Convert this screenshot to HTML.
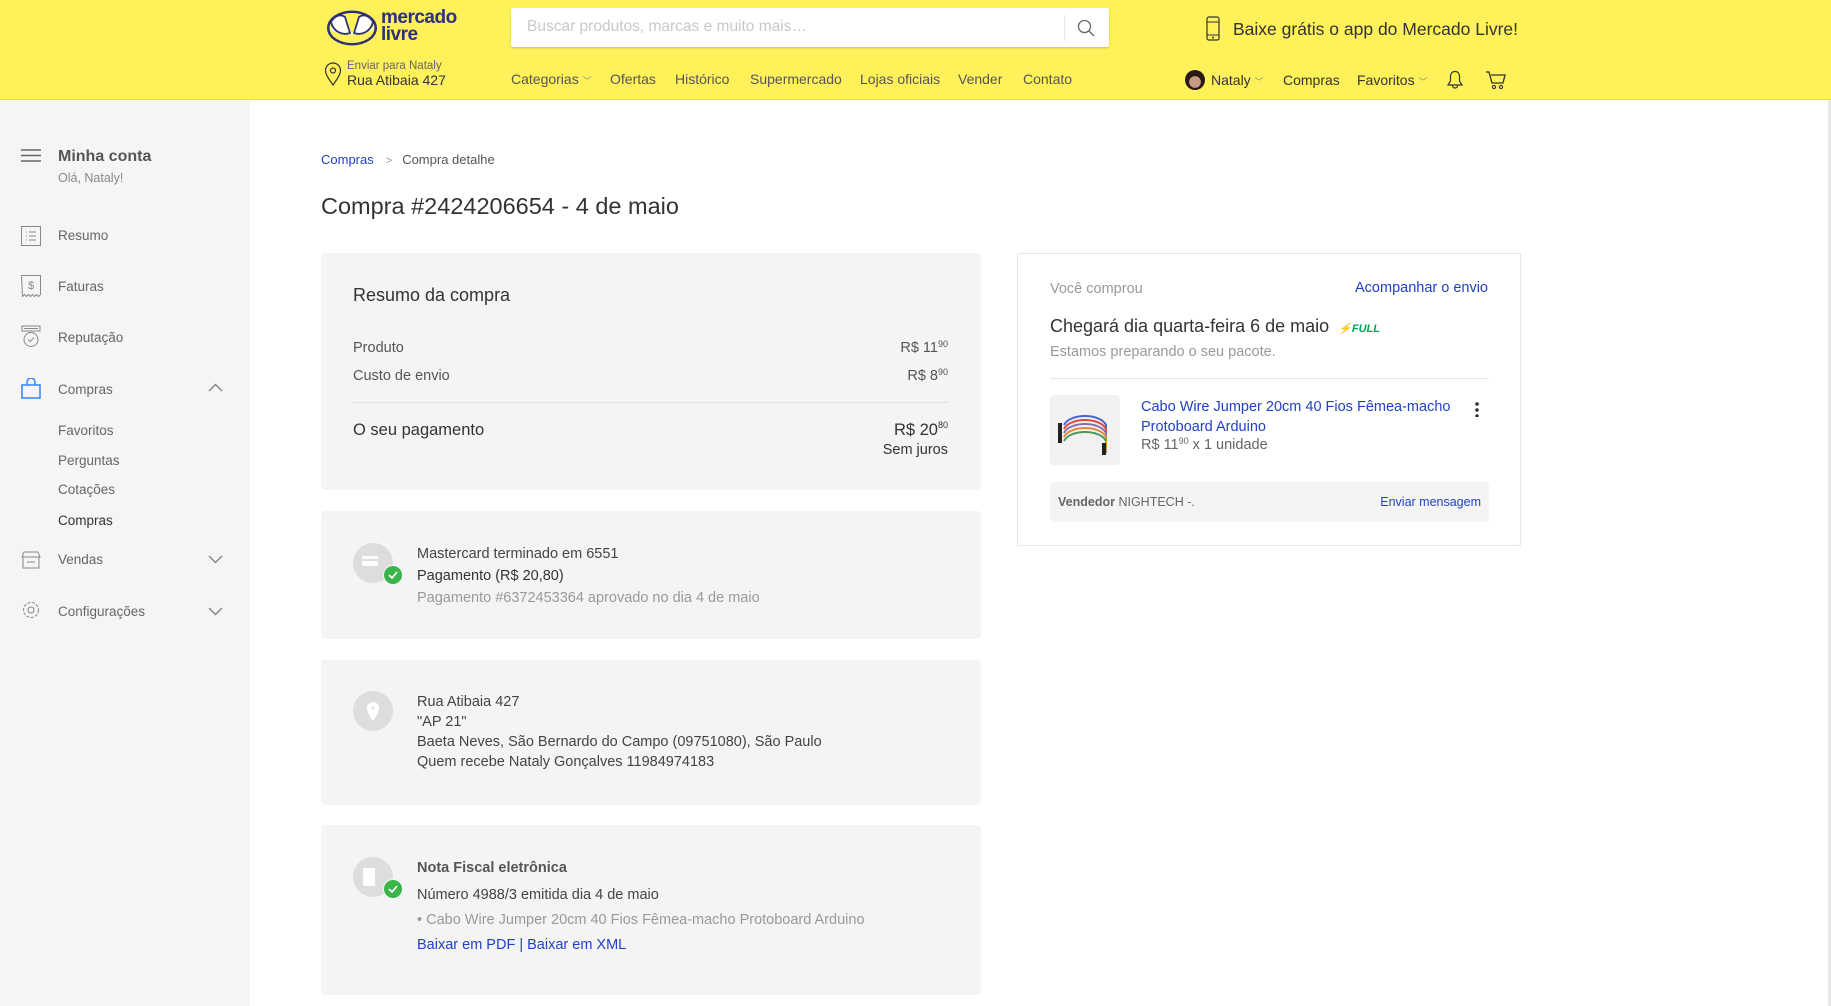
<!DOCTYPE html>
<html><head><meta charset="utf-8">
<style>
*{margin:0;padding:0;box-sizing:border-box}
body{width:1831px;height:1006px;overflow:hidden;background:#fff;font-family:"Liberation Sans",Arial,sans-serif;color:#333;position:relative}
.a{position:absolute;white-space:nowrap}
#hdr{position:absolute;left:0;top:0;width:1831px;height:100px;background:#fff159;border-bottom:1px solid #e8dc50}
#side{position:absolute;left:0;top:100px;width:250px;height:906px;background:#f5f5f5}
.nav{font-size:14px;color:#555;top:71px}
.sb{font-size:13.5px;color:#666;left:58px}
.card{position:absolute;left:321px;width:660px;background:#f4f4f4;border-radius:4px}
.blue{color:#2141c4}
.circ{position:absolute;left:32px;width:40px;height:40px;border-radius:50%;background:#ddd}
.chk{position:absolute;left:30px;top:22px;width:20px;height:20px;border-radius:50%;background:#39b54a;border:1px solid #f4f4f4}
.t14{font-size:14.5px;color:#444}
sup{font-size:9px;vertical-align:top;position:relative;top:-1px}
</style></head><body>
<div id="hdr">
  <svg class="a" style="left:326px;top:9px" width="52" height="38" viewBox="0 0 52 38">
    <ellipse cx="26" cy="19" rx="25" ry="17.5" fill="#2d3277"/>
    <ellipse cx="26" cy="19" rx="22.5" ry="15" fill="#fff159"/>
    <path d="M4 18 C4 28 48 28 48 18 C40 25 12 25 4 18Z" fill="#fff"/>
    <path d="M5 13 C9 6 15 5 19 8 L24 24 C16 27 7 22 5 13Z" fill="#fff" stroke="#2d3277" stroke-width="1.8"/>
    <path d="M47 13 C43 6 37 5 33 8 L28 24 C36 27 45 22 47 13Z" fill="#fff" stroke="#2d3277" stroke-width="1.8"/>
  </svg>
  <div class="a" style="left:381px;top:9px;font-size:19px;line-height:17px;font-weight:bold;color:#2d3277;letter-spacing:-0.5px">mercado<br>livre</div>
  <div class="a" style="left:511px;top:8px;width:598px;height:39px;background:#fff;border-radius:2px;box-shadow:0 1px 2px rgba(0,0,0,.2)"></div>
  <div class="a" style="left:527px;top:18px;font-size:15.5px;color:#c8c8c8">Buscar produtos, marcas e muito mais…</div>
  <div class="a" style="left:1064px;top:15px;width:1px;height:26px;background:#e6e6e6"></div>
  <svg class="a" style="left:1077px;top:19px" width="18" height="18" viewBox="0 0 18 18"><circle cx="7.5" cy="7.5" r="6" fill="none" stroke="#666" stroke-width="1.3"/><path d="M12 12l5 5" stroke="#666" stroke-width="1.3"/></svg>
  <svg class="a" style="left:1206px;top:16px" width="14" height="25" viewBox="0 0 14 25"><rect x="1" y="1" width="12" height="23" rx="2" fill="none" stroke="#333" stroke-width="1.2"/><path d="M1 6h12M1 19h12" stroke="#333" stroke-width="1"/><circle cx="7" cy="21.5" r="1" fill="#333"/></svg>
  <div class="a" style="left:1233px;top:19px;font-size:17.5px;color:#333">Baixe grátis o app do Mercado Livre!</div>
  <svg class="a" style="left:324px;top:62px" width="18" height="24" viewBox="0 0 18 24"><path d="M9 23C4 16 1.5 12 1.5 8.5a7.5 7.5 0 0 1 15 0C16.5 12 14 16 9 23Z" fill="none" stroke="#333" stroke-width="1.2"/><circle cx="9" cy="8.5" r="2.5" fill="none" stroke="#333" stroke-width="1.2"/></svg>
  <div class="a" style="left:347px;top:60px;font-size:11.5px;color:#666">Enviar para Nataly</div>
  <div class="a" style="left:347px;top:72px;font-size:14px;color:#333">Rua Atibaia 427</div>
  <div class="a nav" style="left:511px">Categorias <span style="font-size:9px;color:#888">﹀</span></div>
  <div class="a nav" style="left:610px">Ofertas</div>
  <div class="a nav" style="left:675px">Histórico</div>
  <div class="a nav" style="left:750px">Supermercado</div>
  <div class="a nav" style="left:860px">Lojas oficiais</div>
  <div class="a nav" style="left:958px">Vender</div>
  <div class="a nav" style="left:1023px">Contato</div>
  <div class="a" style="left:1185px;top:70px;width:20px;height:20px;border-radius:50%;background:radial-gradient(circle at 50% 60%,#c99a83 0 35%,#2a1a16 40%)"></div>
  <div class="a" style="left:1211px;top:72px;font-size:14px;color:#333">Nataly <span style="font-size:9px;color:#888">﹀</span></div>
  <div class="a" style="left:1283px;top:72px;font-size:14px;color:#333">Compras</div>
  <div class="a" style="left:1357px;top:72px;font-size:14px;color:#333">Favoritos <span style="font-size:9px;color:#888">﹀</span></div>
  <svg class="a" style="left:1446px;top:70px" width="18" height="20" viewBox="0 0 18 20"><path d="M9 1.5c-3 0-4.5 2.3-4.5 5v4.5L2 15h14l-2.5-4V6.5c0-2.7-1.5-5-4.5-5Z M6.5 15.5a2.5 2.5 0 0 0 5 0" fill="none" stroke="#333" stroke-width="1.2"/></svg>
  <svg class="a" style="left:1485px;top:70px" width="22" height="20" viewBox="0 0 22 20"><path d="M1 2h3l3 11h11l2-8H6" fill="none" stroke="#333" stroke-width="1.3"/><circle cx="9" cy="17" r="1.6" fill="none" stroke="#333" stroke-width="1.1"/><circle cx="16" cy="17" r="1.6" fill="none" stroke="#333" stroke-width="1.1"/></svg>
</div>
<div class="a" style="left:1828px;top:100px;width:3px;height:906px;background:#e8e8e8"></div>

<div id="side">
  <svg class="a" style="left:21px;top:49px" width="20" height="13" viewBox="0 0 20 13"><path d="M0 1h20M0 6.5h20M0 12h20" stroke="#666" stroke-width="1.5"/></svg>
  <div class="a" style="left:58px;top:48px;font-size:16px;font-weight:bold;color:#555">Minha conta</div>
  <div class="a" style="left:58px;top:71px;font-size:12.5px;color:#888">Olá, Nataly!</div>
  <svg class="a" style="left:21px;top:126px" width="20" height="20" viewBox="0 0 20 20"><rect x=".5" y=".5" width="19" height="19" fill="none" stroke="#888"/><path d="M5 6h1M5 10h1M5 14h1M8 6h7M8 10h7M8 14h7" stroke="#888"/></svg>
  <div class="a sb" style="top:128px">Resumo</div>
  <svg class="a" style="left:21px;top:175px" width="20" height="22" viewBox="0 0 20 22"><path d="M.5 .5h19v19l-2 2-2-2-2 2-2-2-2 2-2-2-2 2-2-2-2 2Z" fill="none" stroke="#888"/><text x="10" y="14" font-size="11" text-anchor="middle" fill="#888" font-family="Liberation Sans">$</text></svg>
  <div class="a sb" style="top:179px">Faturas</div>
  <svg class="a" style="left:21px;top:225px" width="20" height="23" viewBox="0 0 20 23"><path d="M1 1h18v5H1Z M3 3.5h14" fill="none" stroke="#888"/><circle cx="10" cy="14.5" r="7" fill="none" stroke="#888"/><path d="M7 14.5l2 2 4-4" fill="none" stroke="#888"/></svg>
  <div class="a sb" style="top:230px">Reputação</div>
  <svg class="a" style="left:21px;top:278px" width="20" height="21" viewBox="0 0 20 21"><path d="M1 7h18v13H1Z M6 7V4a4 4 0 0 1 8 0v3" fill="none" stroke="#3483fa" stroke-width="1.5"/></svg>
  <div class="a sb" style="top:282px">Compras</div>
  <svg class="a" style="left:208px;top:283px" width="15" height="9" viewBox="0 0 15 9"><path d="M1 8l6.5-6.5L14 8" fill="none" stroke="#888" stroke-width="1.5"/></svg>
  <div class="a sb" style="top:323px">Favoritos</div>
  <div class="a sb" style="top:353px">Perguntas</div>
  <div class="a sb" style="top:382px">Cotações</div>
  <div class="a sb" style="top:413px;color:#333">Compras</div>
  <svg class="a" style="left:21px;top:451px" width="20" height="18" viewBox="0 0 20 18"><path d="M1 6l2-5h14l2 5Z M2 6v11h16V6 M6 11h8" fill="none" stroke="#888"/></svg>
  <div class="a sb" style="top:452px">Vendas</div>
  <svg class="a" style="left:208px;top:455px" width="15" height="9" viewBox="0 0 15 9"><path d="M1 1l6.5 6.5L14 1" fill="none" stroke="#888" stroke-width="1.5"/></svg>
  <svg class="a" style="left:21px;top:500px" width="20" height="20" viewBox="0 0 20 20"><circle cx="10" cy="10" r="7.5" fill="none" stroke="#888" stroke-dasharray="3 1.5"/><circle cx="10" cy="10" r="3" fill="none" stroke="#888"/></svg>
  <div class="a sb" style="top:504px">Configurações</div>
  <svg class="a" style="left:208px;top:507px" width="15" height="9" viewBox="0 0 15 9"><path d="M1 1l6.5 6.5L14 1" fill="none" stroke="#888" stroke-width="1.5"/></svg>
</div>

<div class="a" style="left:321px;top:152px;font-size:13px"><span class="blue">Compras</span><span style="color:#999;margin:0 10px 0 12px;font-size:11px">&gt;</span><span style="color:#555">Compra detalhe</span></div>
<div class="a" style="left:321px;top:193px;font-size:23.5px;color:#333">Compra #2424206654 - 4 de maio</div>

<div class="card" style="top:253px;height:237px">
  <div class="a" style="left:32px;top:32px;font-size:18px;color:#333">Resumo da compra</div>
  <div class="a t14" style="left:32px;top:87px;color:#555">Produto</div>
  <div class="a t14" style="right:33px;top:87px;color:#555">R$ 11<sup>90</sup></div>
  <div class="a t14" style="left:32px;top:115px;color:#555">Custo de envio</div>
  <div class="a t14" style="right:33px;top:115px;color:#555">R$ 8<sup>90</sup></div>
  <div class="a" style="left:32px;top:149px;width:595px;height:1px;background:#e2e2e2"></div>
  <div class="a" style="left:32px;top:168px;font-size:16.5px;color:#333">O seu pagamento</div>
  <div class="a" style="right:33px;top:168px;font-size:16.5px;color:#333">R$ 20<sup>80</sup></div>
  <div class="a t14" style="right:33px;top:189px;color:#333">Sem juros</div>
</div>

<div class="card" style="top:511px;height:128px">
  <div class="circ" style="top:32px"><div class="a" style="left:9px;top:13px;width:16px;height:10px;background:#fff;border-radius:1px"></div><div class="a" style="left:9px;top:16px;width:16px;height:2px;background:#ddd"></div><div class="chk"><svg width="18" height="18" viewBox="0 0 18 18"><path d="M5 9l3 3 5-6" fill="none" stroke="#fff" stroke-width="1.6"/></svg></div></div>
  <div class="a t14" style="left:96px;top:35px">Mastercard terminado em 6551</div>
  <div class="a t14" style="left:96px;top:57px;color:#333">Pagamento (R$ 20,80)</div>
  <div class="a t14" style="left:96px;top:79px;color:#999">Pagamento #6372453364 aprovado no dia 4 de maio</div>
</div>

<div class="card" style="top:660px;height:145px">
  <div class="circ" style="top:31px"><svg class="a" style="left:12px;top:9px" width="16" height="22" viewBox="0 0 16 22"><path d="M8 21C3 14 2 11 2 8a6 6 0 0 1 12 0c0 3-1 6-6 13Z" fill="#fff"/><circle cx="8" cy="8" r="1.5" fill="#ddd"/></svg></div>
  <div class="a t14" style="left:96px;top:34px">Rua Atibaia 427</div>
  <div class="a t14" style="left:96px;top:54px">"AP 21"</div>
  <div class="a t14" style="left:96px;top:74px">Baeta Neves, São Bernardo do Campo (09751080), São Paulo</div>
  <div class="a t14" style="left:96px;top:94px">Quem recebe Nataly Gonçalves 11984974183</div>
</div>

<div class="card" style="top:825px;height:170px">
  <div class="circ" style="top:32px"><div class="a" style="left:10px;top:11px;width:12px;height:18px;background:#fff"></div><div class="chk"><svg width="18" height="18" viewBox="0 0 18 18"><path d="M5 9l3 3 5-6" fill="none" stroke="#fff" stroke-width="1.6"/></svg></div></div>
  <div class="a t14" style="left:96px;top:35px;font-weight:bold;color:#555">Nota Fiscal eletrônica</div>
  <div class="a t14" style="left:96px;top:62px">Número 4988/3 emitida dia 4 de maio</div>
  <div class="a t14" style="left:96px;top:87px;color:#999">• Cabo Wire Jumper 20cm 40 Fios Fêmea-macho Protoboard Arduino</div>
  <div class="a t14 blue" style="left:96px;top:112px;color:#2141c4">Baixar em PDF | Baixar em XML</div>
</div>

<div class="a" style="left:1017px;top:253px;width:504px;height:293px;border:1px solid #e6e6e6;border-radius:2px">
  <div class="a" style="left:32px;top:27px;font-size:14.5px;color:#999">Você comprou</div>
  <div class="a blue" style="right:32px;top:26px;font-size:14.5px">Acompanhar o envio</div>
  <div class="a" style="left:32px;top:62px;font-size:18px;color:#333">Chegará dia quarta-feira 6 de maio <span style="color:#00a650;font-size:11px;font-weight:bold;font-style:italic;margin-left:4px">⚡FULL</span></div>
  <div class="a" style="left:32px;top:90px;font-size:14.5px;color:#999">Estamos preparando o seu pacote.</div>
  <div class="a" style="left:32px;top:124px;width:439px;height:1px;background:#e6e6e6"></div>
  <div class="a" style="left:32px;top:141px;width:70px;height:70px;background:#f1f1f1;border-radius:4px">
    <svg width="70" height="70" viewBox="0 0 70 70"><g fill="none" stroke-width="2"><path d="M14 30 C20 18 50 18 56 30 L56 52" stroke="#4a63c8"/><path d="M14 34 C20 22 50 22 56 34 L56 54" stroke="#d84b3b"/><path d="M14 38 C20 26 50 26 56 38 L56 56" stroke="#8a6fb0"/><path d="M14 42 C20 30 50 30 56 42 L56 58" stroke="#e08a3a"/><path d="M14 46 C20 34 50 34 56 46" stroke="#4a9a5a"/></g><path d="M10 28v20M54 48v12" stroke="#222" stroke-width="4"/></svg>
  </div>
  <div class="a blue" style="left:123px;top:143px;font-size:14.5px;line-height:20px">Cabo Wire Jumper 20cm 40 Fios Fêmea-macho<br>Protoboard Arduino</div>
  <div class="a" style="left:123px;top:183px;font-size:14.5px;color:#666">R$ 11<sup>90</sup> x 1 unidade</div>
  <div class="a" style="left:457px;top:147px;width:4px;height:16px;background:radial-gradient(circle,#333 1.6px,transparent 2px) 0 0/4px 6px"></div>
  <div class="a" style="left:32px;top:228px;width:439px;height:40px;background:#f4f4f4;border-radius:4px">
    <div class="a" style="left:8px;top:13px;font-size:12.5px;color:#666"><b>Vendedor</b> NIGHTECH -.</div>
    <div class="a blue" style="right:8px;top:13px;font-size:12.5px">Enviar mensagem</div>
  </div>
</div>
</body></html>
